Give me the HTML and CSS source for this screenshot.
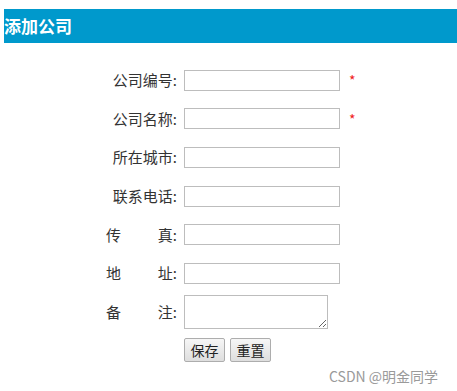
FILE: index.html
```html
<!DOCTYPE html>
<html lang="zh">
<head>
<meta charset="utf-8">
<link rel="stylesheet" href="styles.css">
</head>
<body>
<div class="page">
  <h1 class="title">添加公司</h1>
  <form class="form">
    <label class="lbl">公司编号:</label>
    <div class="field"><input class="inp" type="text"><span class="req">*</span></div>

    <label class="lbl">公司名称:</label>
    <div class="field"><input class="inp" type="text"><span class="req">*</span></div>

    <label class="lbl">所在城市:</label>
    <div class="field"><input class="inp" type="text"></div>

    <label class="lbl">联系电话:</label>
    <div class="field"><input class="inp" type="text"></div>

    <label class="lbl lbl-wide"><span>传</span><span>真:</span></label>
    <div class="field"><input class="inp" type="text"></div>

    <label class="lbl lbl-wide"><span>地</span><span>址:</span></label>
    <div class="field"><input class="inp" type="text"></div>

    <label class="lbl lbl-wide"><span>备</span><span>注:</span></label>
    <div class="field"><textarea class="area"></textarea></div>

    <div></div>
    <div class="field btns"><button type="button" class="btn">保存</button><button type="button" class="btn">重置</button></div>
  </form>
  <div class="mark">CSDN @明金同学</div>
</div>
</body>
</html>
```
FILE: styles.css
```css
html, body {
  margin: 0;
  padding: 0;
  background: #fff;
}
body {
  font-family: "Noto Sans CJK SC", "Noto Sans", sans-serif;
  color: #333;
}
.page {
  position: relative;
  width: 457px;
  height: 391px;
  overflow: hidden;
}
.title {
  margin: 9px 0 0 4px;
  height: 34px;
  line-height: 34px;
  background: #0099cc;
  color: #fff;
  font-size: 17px;
  font-weight: bold;
  padding: 0;
}
.form {
  margin-top: 18px;
  display: grid;
  grid-template-columns: 177px auto;
  grid-auto-rows: 38.6px;
  column-gap: 7px;
  align-items: center;
}
.lbl {
  text-align: right;
  font-size: 15px;
  line-height: 20px;
  color: #333;
}
.lbl-wide {
  display: flex;
  justify-content: space-between;
  padding-left: 106px;
}
.field {
  display: flex;
  align-items: center;
}
.inp {
  box-sizing: border-box;
  width: 156px;
  height: 21px;
  margin: 0;
  border: 1px solid #bdbdbd;
  padding: 0 2px;
  background: #fff;
}
.area {
  box-sizing: border-box;
  width: 144px;
  height: 34px;
  margin: 0;
  border: 1px solid #bdbdbd;
  padding: 2px;
  resize: both;
}
.req {
  color: #f02020;
  font-size: 14px;
  line-height: 14px;
  margin-left: 9px;
  margin-top: 0px;
}
.btns {
  gap: 5px;
}
.btn {
  box-sizing: border-box;
  width: 41px;
  height: 24px;
  padding: 0;
  margin: 0;
  border: 1px solid #adadad;
  border-radius: 2px;
  background: linear-gradient(#f6f6f6, #dedede);
  font-family: "Noto Sans CJK SC", sans-serif;
  font-size: 14px;
  color: #222;
}
.mark {
  position: absolute;
  left: 329px;
  top: 366px;
  font-size: 14px;
  color: #9a9a9a;
  white-space: nowrap;
}
```
